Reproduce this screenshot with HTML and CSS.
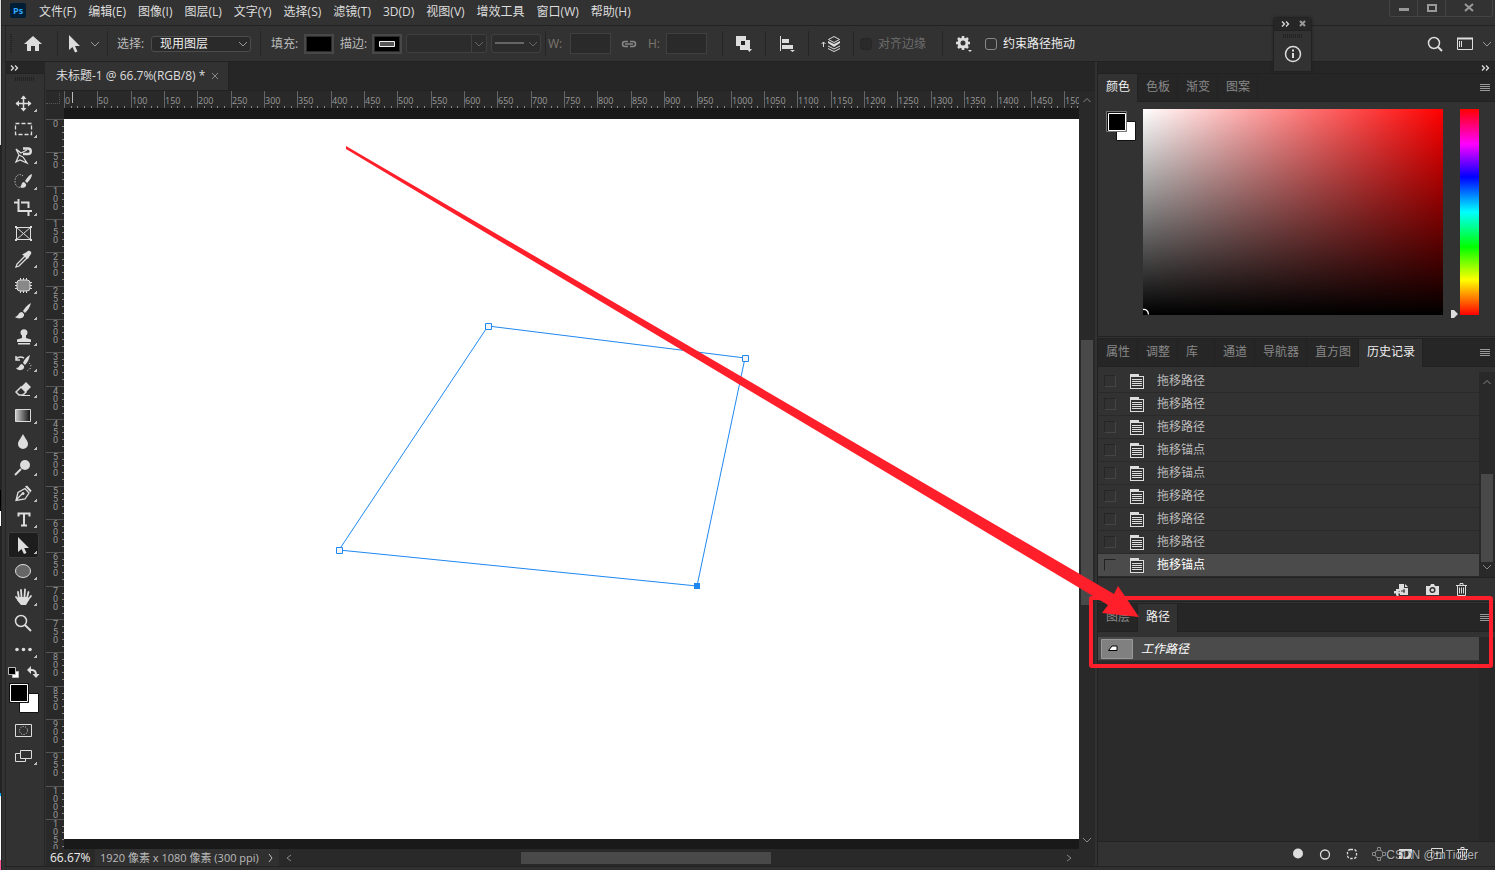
FILE: index.html
```html
<!DOCTYPE html>
<html lang="zh-CN">
<head>
<meta charset="utf-8">
<title>未标题-1 @ 66.7%(RGB/8)</title>
<link rel="stylesheet" href="styles.css">
</head>
<body>
<svg class="defs" aria-hidden="true">
  <symbol id="chev" viewBox="0 0 10 10"><path d="M1 3l4 4 4-4" fill="none" stroke="currentColor"/></symbol>
  <symbol id="chev-up" viewBox="0 0 10 10"><path d="M1.500 7L5 3.500 8.500 7" fill="none" stroke="currentColor"/></symbol>
  <symbol id="dbl" viewBox="0 0 10 8"><path d="M1 1.500L3.500 4 1 6.500M5 1.500L7.500 4 5 6.500" fill="none" stroke="currentColor" stroke-width="1.300"/></symbol>
  <symbol id="burger" viewBox="0 0 10 8"><path d="M0 .5h10M0 2.500h10M0 4.500h10M0 6.500h10" stroke="currentColor"/></symbol>
  <symbol id="doc" viewBox="0 0 14 16"><path d="M0 0h9v2h5v13H0z" fill="currentColor"/><path class="doc-in" d="M1 3h12v11H1z"/><path d="M2 5.500h10M2 7.500h10M2 9.500h10M2 11.500h10" stroke="currentColor"/></symbol>
  <symbol id="cursor" viewBox="0 0 14 18"><path d="M1 0v15l3.500-3 2.500 5.500 2.500-1L7 11h5z" fill="currentColor"/></symbol>
  <symbol id="trash" viewBox="0 0 12 14"><path d="M0 2.500h11M4 2V.500h3V2M1.500 3v9.500h8V3M3.500 4.500v6M5.500 4.500v6M7.500 4.500v6" fill="none" stroke="currentColor"/></symbol>
</svg>
<div class="app">
  <div class="edge"></div>
  <div class="window">
    <header class="menubar">
      <svg class="logo" viewBox="0 0 16 15" role="img" aria-label="Ps"><rect width="16" height="15" rx="2" fill="#001e36"/><text x="3" y="11" class="logo-text">Ps</text></svg>
      <nav class="menus">
        <button>文件(F)</button><button>编辑(E)</button><button>图像(I)</button><button>图层(L)</button><button>文字(Y)</button><button>选择(S)</button><button>滤镜(T)</button><button>3D(D)</button><button>视图(V)</button><button>增效工具</button><button>窗口(W)</button><button>帮助(H)</button>
      </nav>
      <div class="winbtns">
        <button aria-label="最小化"><svg width="10" height="10"><path d="M0 6.500h10" stroke="currentColor" stroke-width="3"/></svg></button>
        <button aria-label="最大化"><svg width="10" height="10"><path d="M1 2h8v6H1z" fill="none" stroke="currentColor" stroke-width="2"/></svg></button>
        <button class="wide" aria-label="关闭"><svg width="10" height="10"><path d="M1 1l8 7M9 1L1 8" stroke="currentColor" stroke-width="2"/></svg></button>
      </div>
    </header>

    <div class="options">
      <span class="grip-v"></span>
      <button class="home" aria-label="主页"><svg width="18" height="16"><path d="M9 0L0 8h3v7h4v-5h4v5h4V8h3z" fill="currentColor"/></svg></button>
      <i class="sep"></i>
      <button class="cur" aria-label="直接选择工具"><svg width="14" height="18"><use href="#cursor"/></svg><svg class="dim" width="10" height="10"><use href="#chev"/></svg></button>
      <i class="sep"></i>
      <label class="lab" for="sel">选择:</label>
      <span class="selwrap"><select id="sel" class="sel"><option>现用图层</option></select><svg class="selchev" width="10" height="10"><use href="#chev"/></svg></span>
      <i class="sep"></i>
      <span class="lab fill">填充:</span><button class="swatch" aria-label="填充颜色"></button>
      <span class="lab lab2">描边:</span><button class="swatch" aria-label="描边颜色"><svg width="16" height="6"><path d="M.5.5h15v5H.5z" fill="#555" stroke="#eee"/></svg></button>
      <button class="combo" aria-label="描边宽度"><svg width="10" height="10"><use href="#chev"/></svg></button>
      <button class="combo line" aria-label="描边类型"><svg width="29" height="4"><path d="M0 1h29" stroke="currentColor" stroke-width="2"/></svg><svg width="10" height="10"><use href="#chev"/></svg></button>
      <i class="sep tight"></i>
      <label class="wh" for="w">W:</label><input id="w" class="num">
      <svg class="link" width="16" height="10"><path d="M7 2.500H4a2.500 2.500 0 0 0 0 5h3M9 2.500h3a2.500 2.500 0 0 1 0 5H9M4 5h8" fill="none" stroke="currentColor" stroke-width="1.500"/></svg>
      <label class="wh" for="h">H:</label><input id="h" class="num">
      <i class="sep s3"></i>
      <button class="ico" aria-label="路径操作"><svg width="18" height="18"><path d="M1 1h10v4h4v10H5v-4H1z" fill="currentColor"/><path d="M6 6h4v4H6z" fill="#222"/><path d="M12 14h5l-2.500 3z" fill="currentColor"/></svg></button>
      <i class="sep"></i>
      <button class="ico" aria-label="路径对齐"><svg width="18" height="18"><path d="M2.500 1v15" stroke="currentColor"/><path d="M4 4h7v4H4zM4 10h11v4H4zM12 15h5l-2.500 2z" fill="currentColor"/></svg></button>
      <i class="sep"></i>
      <button class="ico" aria-label="路径排列"><svg width="20" height="18"><path d="M2.500 12V7M.5 9l2-2 2 2" fill="none" stroke="currentColor"/><path d="M7 6l6 3 6-3v2l-6 4-6-4z" fill="currentColor"/><path d="M7.500 4.500L13 1.500l5.500 3-5.500 3zM7 11l6 3 6-3M7 13.500l6 3 6-3" fill="none" stroke="currentColor"/></svg></button>
      <i class="sep"></i>
      <label class="check off"><input type="checkbox" disabled>对齐边缘</label>
      <i class="sep s4"></i>
      <button class="ico" aria-label="设置"><svg width="18" height="18"><circle cx="8" cy="8" r="4" fill="none" stroke="currentColor" stroke-width="3"/><path d="M8 1v3M8 12v3M1 8h3M12 8h3M3 3l2 2M11 11l2 2M13 3l-2 2M3 13l2-2" stroke="currentColor" stroke-width="2.500"/><path d="M13 15h4l-2 2z" fill="currentColor"/></svg></button>
      <label class="check"><input type="checkbox">约束路径拖动</label>
      <div class="right">
        <button aria-label="搜索"><svg width="16" height="16"><circle cx="7" cy="7" r="5.500" fill="none" stroke="currentColor" stroke-width="1.500"/><path d="M11 11l4 4" stroke="currentColor" stroke-width="2"/></svg></button>
        <button aria-label="工作区"><svg width="16" height="14"><path d="M.5 1.500h15v11H.5z" fill="none" stroke="currentColor"/><path d="M0 1.500h16" stroke="currentColor" stroke-width="2"/><path d="M2.500 4v6M4.500 4v6" stroke="currentColor"/></svg></button>
        <button class="rchev" aria-label="更多"><svg width="10" height="10"><use href="#chev"/></svg></button>
      </div>
    </div>

    <div class="main">
      <aside class="tools">
        <div class="thead"><svg width="10" height="8"><use href="#dbl"/></svg></div>
        <div class="grip-h"></div>
        <div class="toollist" id="tools">
          <button aria-label="移动"><svg class="t"><path d="M15.500 6v14M8 13.500h15" stroke="currentColor" stroke-width="1.500"/><path d="M12.500 9l3-3.500 3 3.500zM12.500 18l3 3.500 3-3.500zM11 10.500l-3.500 3 3.500 3zM20 10.500l3.500 3-3.500 3z" fill="currentColor"/></svg></button>
          <button aria-label="矩形选框"><svg class="t"><path d="M7.500 7.500h16v11h-16z" fill="none" stroke="currentColor" stroke-dasharray="4 2" stroke-width="1.300"/></svg></button>
          <button aria-label="套索"><svg class="t"><path d="M8 7l5 4 6-3M8 7l3 6-3 7 4-2 7 3-4-6M11 13l4 2" fill="none" stroke="currentColor" stroke-width="1.300"/><path d="M15 6.500h5a2.500 2.500 0 0 1 0 5.500h-5" fill="none" stroke="currentColor" stroke-width="2.500"/></svg></button>
          <button aria-label="快速选择"><svg class="t"><path d="M15 8c-3-3-8-1-8 5s4 7 7 6" fill="none" stroke="currentColor" stroke-dasharray="1 1.500"/><path d="M24 6c-3 1-5 4-7 7l2 2c3-3 5-6 5-9zM16 14c-3 0-2 4-4 5 3 2 7 0 6-3z" fill="currentColor"/></svg></button>
          <button aria-label="裁剪"><svg class="t"><path d="M6 8.500h4M10.500 5v12H24M13 8.500h7.500V14M20.500 18v4" fill="none" stroke="currentColor" stroke-width="2"/></svg></button>
          <button class="nf" aria-label="图框"><svg class="t"><path d="M8.500 7.500h14v12h-14zM8 7l15 13M23 7L8 20" fill="none" stroke="currentColor"/><path d="M7 6h2v2H7zM22 6h2v2h-2zM7 19h2v2H7zM22 19h2v2h-2z" fill="currentColor"/></svg></button>
          <button aria-label="吸管"><svg class="t"><path d="M17 10l-8 8-1 3 3-1 8-8" fill="none" stroke="currentColor" stroke-width="1.300"/><path d="M15 8l2-1 3-2c2-1 4 1 3 3l-2 3-1 2-2-1-4-4z" fill="currentColor"/></svg></button>
          <button aria-label="修复"><svg class="t"><rect x="9" y="8" width="13" height="11" rx="3" fill="#888" stroke="currentColor"/><path d="M12.500 6v2M15.500 6v2M18.500 6v2M12.500 19v2M15.500 19v2M18.500 19v2M7 10.500h2M7 13.500h2M7 16.500h2M22 10.500h2M22 13.500h2M22 16.500h2" stroke="currentColor"/></svg></button>
          <button aria-label="画笔"><svg class="t"><path d="M23 5c-4 2-7 6-8 8l2 2c3-3 5-6 6-10zM14 14c-4 0-3 4-7 5 4 3 10 1 9-3z" fill="currentColor"/></svg></button>
          <button aria-label="图章"><svg class="t"><path d="M14 14v-2.500a3.500 3.500 0 1 1 4 0V14l5 1.500V18H9v-2.500zM10 19h12v1.500H10z" fill="currentColor"/></svg></button>
          <button aria-label="历史画笔"><svg class="t"><path d="M22 5c-4 2-6 5-7 8l2 2c3-3 4-6 5-10zM14 14c-3 0-2 4-6 4 3 4 9 2 8-2z" fill="currentColor"/><path d="M8 6v4h4M8 9c3-3 6-2 8-1" fill="none" stroke="currentColor" stroke-width="1.500"/><path d="M21 13l2 2-1 4-3 2" fill="none" stroke="currentColor" stroke-dasharray="1 2"/></svg></button>
          <button aria-label="橡皮擦"><svg class="t"><path d="M8 16l5-5 5 5-3 3h-4z" fill="none" stroke="currentColor" stroke-width="1.500"/><path d="M13 11l5-5 5 5-5 5zM14 19h8v1h-9z" fill="currentColor"/></svg></button>
          <button aria-label="渐变"><svg class="t"><defs><linearGradient id="gg"><stop stop-color="#ccc"/><stop offset="1" stop-color="#111"/></linearGradient></defs><path d="M7.500 7.500h15v12h-15z" fill="url(#gg)" stroke="currentColor"/></svg></button>
          <button aria-label="模糊"><svg class="t"><path d="M15 6c2 4 5 7 5 10a5 5 0 0 1-10 0c0-3 3-6 5-10z" fill="currentColor"/></svg></button>
          <button aria-label="减淡"><svg class="t"><circle cx="17" cy="11" r="5" fill="currentColor"/><path d="M13 15l-6 6" stroke="currentColor" stroke-width="2"/></svg></button>
          <button aria-label="钢笔"><svg class="t"><path d="M8 20.500l2-8 7-4 4 4.500-4 6zM8 20l6-6" fill="none" stroke="currentColor" stroke-width="1.300"/><circle cx="15" cy="13.500" r="1.500" fill="currentColor"/><path d="M17 6.500l2-1 4.500 5-1 2z" fill="currentColor"/></svg></button>
          <button aria-label="文字"><svg class="t"><path d="M10.500 10.500V7.500h11v3M16 7v12M13 19.500h6" fill="none" stroke="currentColor" stroke-width="2"/></svg></button>
          <button class="on" aria-label="直接选择"><svg class="t"><path d="M10 5v15l3.500-3 2.500 5 2.500-1-2.300-5H21z" fill="currentColor"/></svg></button>
          <button aria-label="椭圆"><svg class="t"><ellipse cx="15" cy="13" rx="7.500" ry="6.500" fill="#666" stroke="currentColor"/></svg></button>
          <button aria-label="抓手"><svg class="t"><path d="M11 15l-1-7M13.500 13l-.5-7M16.500 13l.5-7.500M19 14l1.500-6M8 13l4 5M23 12l-4 5" stroke="currentColor" stroke-width="1.800" stroke-linecap="round"/><path d="M10 13h10l1 3-3 5h-5l-4-5z" fill="currentColor"/></svg></button>
          <button class="nf" aria-label="缩放"><svg class="t"><circle cx="13" cy="11" r="5.500" fill="none" stroke="currentColor" stroke-width="1.500"/><path d="M17 15l6 6" stroke="currentColor" stroke-width="2"/></svg></button>
          <button aria-label="更多工具"><svg class="t"><circle cx="9" cy="13.500" r="1.800" fill="currentColor"/><circle cx="15.500" cy="13.500" r="1.800" fill="currentColor"/><circle cx="22" cy="13.500" r="1.800" fill="currentColor"/></svg></button>
        </div>
        <svg class="fgbg" width="34" height="54">
          <path d="M4.500 8.500h6v6h-6z" fill="#fff" stroke="#bbb"/><path d="M.5 4.500h7v7h-7z" fill="#000" stroke="#bbb"/>
          <path d="M22 7h2q4 0 4 5" fill="none" stroke="#ddd" stroke-width="2"/><path d="M23 3v8l-4-4zM24.500 11h7L28 15z" fill="#ddd"/>
          <path d="M11.500 30.500h19v19h-19z" fill="#fff" stroke="#111"/><path d="M1.500 20.500h19v19h-19z" fill="#000" stroke="#111"/><path d="M2.500 21.500h17v17h-17z" fill="#000" stroke="#fff"/>
        </svg>
        <div class="toollist">
          <button class="nf" aria-label="快速蒙版"><svg class="t"><path d="M7.500 7.500h16v12h-16z" fill="none" stroke="currentColor"/><circle cx="15.500" cy="13.500" r="4" fill="none" stroke="currentColor" stroke-dasharray="1 1.500"/></svg></button>
          <button aria-label="屏幕模式"><svg class="t"><path d="M7.500 10.500h10v8h-10z" fill="none" stroke="currentColor"/><path d="M12.500 7.500h11v8h-11z" fill="#323232" stroke="currentColor"/></svg></button>
        </div>
      </aside>

      <main class="docarea">
        <div class="tabs"><div class="doctab"><span>未标题-1 @ 66.7%(RGB/8) *</span><button aria-label="关闭文档"><svg width="8" height="8"><path d="M1 1l6 6M7 1L1 7" stroke="currentColor"/></svg></button></div></div>
        <div class="work">
          <div class="corner"></div>
          <svg class="ruler rh" id="rh"></svg>
          <div class="vsb-top"><svg width="10" height="10"><use href="#chev-up"/></svg></div>
          <svg class="ruler rv" id="rv"></svg>
          <div class="stage"><div class="page">
            <svg class="path">
              <path d="M424 207L681 239 633 467 275 431z" fill="none" stroke="#1e88f0"/>
              <path d="M421.500 204.500h6v6h-6zM678.500 236.500h6v6h-6zM272.500 428.500h6v6h-6z" fill="#f4f4f4" stroke="#1e88f0"/><path d="M630 464h6v6h-6z" fill="#1e88f0"/>
            </svg>
          </div></div>
          <div class="vsb"><span class="vthumb"></span><svg width="10" height="10"><use href="#chev"/></svg></div>
        </div>
        <div class="status">
          <input class="zoomval" aria-label="缩放比例" value="66.67%">
          <button class="info"><span>1920 像素 x 1080 像素 (300 ppi)</span><svg width="6" height="10"><path d="M1 1l3 4-3 4" fill="none" stroke="currentColor"/></svg></button>
          <div class="hsb"><svg width="6" height="8"><path d="M5 1L1 4l4 3" fill="none" stroke="currentColor"/></svg><span class="hthumb"></span><svg width="6" height="8"><path d="M1 1l4 3-4 3" fill="none" stroke="currentColor"/></svg></div>
        </div>
      </main>

      <aside class="panels">
        <div class="phead"><svg width="10" height="8"><use href="#dbl"/></svg></div>
        <section>
          <div class="ptabs"><button class="on">颜色</button><button>色板</button><button>渐变</button><button>图案</button><svg class="burger" width="10" height="8"><use href="#burger"/></svg></div>
          <div class="color">
            <svg class="fb" width="32" height="34"><path d="M10.500 10.500h19v19h-19z" fill="#fff" stroke="#111"/><path d="M.5.5h20v20H.5z" fill="#111" stroke="#777"/><path d="M2.500 2.500h17v17h-17z" fill="#000" stroke="#fff"/></svg>
            <div class="field"><svg width="7" height="7"><path d="M0 1.500q5-.5 5.500 5" fill="none" stroke="#fff" stroke-width="1.300"/></svg></div>
            <div class="hue"><svg width="8" height="8"><path d="M1 0h3l4 4-4 4H1z" fill="#ddd"/></svg></div>
          </div>
        </section>
        <section>
          <div class="ptabs"><button>属性</button><button>调整</button><button class="ku">库</button><button>通道</button><button>导航器</button><button>直方图</button><button class="on">历史记录</button><svg class="burger" width="10" height="8"><use href="#burger"/></svg></div>
          <div class="hist">
            <div class="rows" id="rows">
              <label><input type="checkbox"><svg width="14" height="16"><use href="#doc"/></svg>拖移路径</label>
              <label><input type="checkbox"><svg width="14" height="16"><use href="#doc"/></svg>拖移路径</label>
              <label><input type="checkbox"><svg width="14" height="16"><use href="#doc"/></svg>拖移路径</label>
              <label><input type="checkbox"><svg width="14" height="16"><use href="#doc"/></svg>拖移锚点</label>
              <label><input type="checkbox"><svg width="14" height="16"><use href="#doc"/></svg>拖移锚点</label>
              <label><input type="checkbox"><svg width="14" height="16"><use href="#doc"/></svg>拖移路径</label>
              <label><input type="checkbox"><svg width="14" height="16"><use href="#doc"/></svg>拖移路径</label>
              <label><input type="checkbox"><svg width="14" height="16"><use href="#doc"/></svg>拖移路径</label>
              <label class="cur-row"><input type="checkbox"><svg width="14" height="16"><use href="#doc"/></svg>拖移锚点</label>
            </div>
            <div class="hscroll"><svg width="10" height="10"><use href="#chev-up"/></svg><span></span><svg width="10" height="10"><use href="#chev"/></svg></div>
          </div>
          <div class="hfoot">
            <button aria-label="从当前状态创建新文档"><svg width="15" height="12"><path d="M5 0h5v4h4v7H6V7H3v4H2V9H0V7h2V5h3z" fill="currentColor"/><path d="M11 0l3 3h-3z" fill="currentColor"/><path d="M3.500 5v7M0 8.500h9M8 3.500v4" stroke="currentColor" stroke-width="2"/><path d="M10 5v4M7 7h4" stroke="#323232"/></svg></button>
            <button aria-label="创建新快照"><svg width="13" height="12"><path d="M0 2h4l1-2h3l1 2h4v9H0z" fill="currentColor"/><circle cx="6.500" cy="6" r="2.300" fill="none" stroke="#323232" stroke-width="1.500"/></svg></button>
            <button aria-label="删除当前状态"><svg width="12" height="14"><use href="#trash"/></svg></button>
          </div>
        </section>
        <section class="paths">
          <div class="ptabs"><button>图层</button><button class="on">路径</button><svg class="burger" width="10" height="8"><use href="#burger"/></svg></div>
          <div class="pbody">
            <div class="plist"><button class="prow"><svg width="32" height="20"><path d="M.5.5h31v19H.5z" fill="#808080" stroke="#999"/><path d="M7.500 11.500L11 7h5v4.500z" fill="#fff" stroke="#000"/></svg><em>工作路径</em></button></div>
            <div class="pscroll"></div>
          </div>
          <div class="pfoot">
            <button aria-label="填充路径"><svg width="14" height="14"><circle cx="7" cy="6.500" r="5" fill="currentColor"/></svg></button>
            <button aria-label="描边路径"><svg width="14" height="14"><circle cx="7" cy="7.500" r="4.500" fill="none" stroke="currentColor" stroke-width="1.300"/></svg></button>
            <button aria-label="作为选区载入"><svg width="14" height="14"><rect x="2.500" y="2.500" width="9" height="9" rx="3" fill="none" stroke="currentColor" stroke-dasharray="2.500 1.500" stroke-width="1.300"/></svg></button>
            <button class="faint" aria-label="生成工作路径"><svg width="14" height="14"><circle cx="7" cy="7" r="4" fill="none" stroke="currentColor"/><path d="M5.500.5h3v3h-3zM5.500 10.500h3v3h-3zM.5 5.500h3v3h-3zM10.500 5.500h3v3h-3z" fill="#323232" stroke="currentColor"/></svg></button>
            <button aria-label="添加蒙版"><svg width="14" height="14"><path d="M0 2h13v10H0z" fill="currentColor"/><circle cx="6.500" cy="7" r="3" fill="#323232"/></svg></button>
            <button class="mid" aria-label="新建路径"><svg width="14" height="14"><path d="M1.500 1.500h11v10h-11zM7 4v5M4.500 6.500h5" fill="none" stroke="currentColor"/></svg></button>
            <button aria-label="删除路径"><svg width="12" height="14"><use href="#trash"/></svg></button>
          </div>
        </section>
      </aside>
    </div>
    <div class="bottom"></div>
  </div>

  <div class="float">
    <div class="fhead"><svg width="10" height="8"><use href="#dbl"/></svg><svg width="8" height="8"><path d="M1 1l5 5M6 1L1 6" stroke="#999" stroke-width="2"/></svg></div>
    <div class="grip-h"></div>
    <button aria-label="信息"><svg width="18" height="18"><circle cx="9" cy="9" r="7.500" fill="none" stroke="currentColor" stroke-width="1.500"/><path d="M9 8v5M9 4.500v2" stroke="currentColor" stroke-width="2"/></svg></button>
  </div>
  <svg class="annot" aria-hidden="true">
    <path d="M346 146L1114 594 1118 586 1139 617 1102 613 1108 605 346 149z" fill="#ff1f2a"/>
    <rect x="1091" y="598" width="400" height="68" rx="1" fill="none" stroke="#ff1f2a" stroke-width="4"/>
  </svg>
  <div class="mark">CSDN @mTicker</div>
</div>
<script src="ruler.js"></script>
</body>
</html>
```
FILE: styles.css
```css
* { box-sizing: border-box; }
body { margin: 0; background: #323232; color: #ddd; font: 12px/16px "Open Sans", "Noto Sans CJK SC", sans-serif; }
button, input, select { font: inherit; color: inherit; background: none; border: 0; padding: 0; margin: 0; }
svg { display: block; flex: none; }
.defs { position: absolute; width: 0; height: 0; }
.app { position: relative; display: flex; height: 100vh; overflow: hidden; }
.edge { width: 1px; background: linear-gradient(#ddd 0 145px, #222 145px 490px, #000 490px 511px, #fff 511px 526px, #222 526px 793px, #0af 793px 796px, #fff 796px 860px, #f59 860px); }
.window { flex: 1; min-width: 0; display: flex; flex-direction: column; border-left: 1px solid #252525; }

.menubar { display: flex; height: 26px; border-bottom: 1px solid #222; padding-left: 8px; align-items: flex-start; }
.logo { width: 16px; height: 15px; margin-top: 3px; }
.logo-text { font: bold 9px "Open Sans", sans-serif; fill: #31a8ff; }
.menus { display: flex; gap: 12px; padding: 4px 0 0 13px; }
.menus button { white-space: nowrap; }
.winbtns { display: flex; margin: 0 2px 0 auto; height: 17px; border: 1px solid #444; border-top: 0; border-radius: 0 0 3px 3px; color: #999; }
.winbtns button { width: 28px; display: flex; justify-content: center; align-items: center; border-right: 1px solid #444; }
.winbtns .wide { width: 46px; border: 0; }

.options { display: flex; height: 36px; align-items: center; border-bottom: 1px solid #222; margin-left: 3px; border-left: 1px solid #252525; white-space: nowrap; }
.grip-v { width: 2px; height: 20px; margin-left: 4px; background: repeating-linear-gradient(#222 0 1px, #323232 1px 2px); }
.home { margin: 0 15px 0 12px; }
.sep { width: 1px; height: 25px; background: #252525; flex: none; }
.cur { display: flex; align-items: center; gap: 8px; margin: 0 7px 0 10px; }
.dim { color: #999; }
.lab { color: #bbb; margin-left: 9px; width: 34px; }
.fill { margin-left: 10px; width: 33px; }
.lab2 { margin-left: 6px; width: 32px; }
.selwrap { position: relative; margin-right: 9px; }
.sel { appearance: none; width: 100px; height: 16px; background: #2a2a2a; border: 1px solid #4c4c4c; border-radius: 3px; padding-left: 8px; line-height: 14px; color: #eee; display: block; }
.selchev { position: absolute; right: 3px; top: 3px; color: #999; }
.swatch { width: 30px; height: 20px; border: 2px solid #484848; background: #000; display: flex; align-items: center; justify-content: center; outline: 1px solid #2c2c2c; outline-offset: -3px; }
.combo { width: 81px; height: 19px; margin-left: 4px; background: linear-gradient(90deg, transparent 64px, #404040 64px 65px, transparent 65px) #2c2c2c; border: 1px solid #404040; border-radius: 3px; display: flex; justify-content: flex-end; align-items: center; padding-right: 2px; color: #666; }
.line { width: 50px; background: #2c2c2c; justify-content: space-between; padding-left: 3px; }
.tight { margin-left: 4px; }
.wh { color: #7d766d; width: 18px; margin-left: 2px; }
.num { width: 41px; height: 21px; margin-left: 4px; background: #2a2a2a; border: 1px solid #404040; }
.link { color: #888; margin-left: 10px; }
.link + .wh { margin-left: 11px; }
.link + .wh + .num { margin-left: 0; }
.s3 { margin-left: 15px; }
.ico { margin: 0 12px; }
.check { display: flex; align-items: center; gap: 6px; color: #eee; }
.check input { appearance: none; width: 12px; height: 12px; border: 1px solid #888; border-radius: 3px; }
.off { color: #6b6b6b; margin-left: 6px; }
.off input { border-color: #262626; background: #2a2a2a; }
.s4 { margin-left: 16px; }
.right { display: flex; align-items: center; gap: 14px; margin: 0 3px 0 auto; }
.rchev { margin-left: -5px; color: #999; }

.main { flex: 1; min-height: 0; display: flex; margin-left: 3px; border-bottom: 1px solid #222; }
.bottom { height: 3px; background: #303030; }
.tools { width: 40px; border: 1px solid #252525; border-width: 0 1px; }
.thead { height: 12px; background: #262626; border-bottom: 1px solid #222; padding: 2px 0 0 4px; }
.grip-h { width: 20px; height: 4px; margin: 3px auto 0; background: repeating-linear-gradient(90deg, #222 0 1px, #323232 1px 2px); }
.tools .grip-h { margin-bottom: 9px; }
.toollist { display: flex; flex-direction: column; padding-left: 2px; }
.toollist button { width: 31px; height: 26px; position: relative; flex: none; }
.t { width: 31px; height: 26px; }
.toollist button::after { content: ""; position: absolute; right: 2px; bottom: 4px; width: 3px; height: 3px; background: linear-gradient(135deg, transparent 40%, #bbb 40%); }
.toollist .nf::after { display: none; }
.toollist .on { background: #1d1d1d; border-radius: 3px; box-shadow: inset 0 0 0 1px #3d3d3d; }
.fgbg { margin: 1px 0 0 2px; }

.docarea { flex: 1; min-width: 0; display: flex; flex-direction: column; margin-left: 1px; background: #262626; }
.tabs { height: 29px; border-bottom: 1px solid #222; display: flex; }
.doctab { display: flex; align-items: center; gap: 6px; padding: 0 9px 0 10px; background: #323232; border-right: 1px solid #222; white-space: nowrap; }
.doctab button { color: #888; }
.work { flex: 1; min-height: 0; display: grid; grid-template: 17px minmax(0, 1fr) / 18px minmax(0, 1fr) 16px; background: #292929; }
.corner { border: dotted #555; border-width: 0 1px 1px 0; margin: 2px 4px 4px 0; }
.ruler { width: 100%; height: 100%; overflow: hidden; }
.rlab { font: 9px "Open Sans", sans-serif; fill: #999; }
.rv .rlab { font: 9px "Roboto", sans-serif; }
.vsb-top, .vsb { color: #888; display: flex; flex-direction: column; align-items: center; }
.vsb-top { justify-content: center; }
.vsb { justify-content: flex-end; padding-bottom: 4px; }
.vthumb { width: 12px; height: 36%; margin-bottom: 230px; background: #494949; }
.stage { background: #191919; padding: 11px 0 10px; min-height: 0; }
.page { background: #fff; height: 100%; }
.path { width: 100%; height: 100%; }
.status { height: 17px; display: flex; background: #292929; white-space: nowrap; }
.zoomval { width: 49px; padding-left: 4px; color: #eee; }
.info { display: flex; align-items: center; gap: 9px; padding: 0 5px; background: #303030; color: #bbb; font-size: 11px; }
.hsb { flex: 1; display: flex; align-items: center; justify-content: space-between; padding: 0 23px 0 7px; color: #888; }
.hthumb { width: 250px; height: 12px; background: #494949; margin-right: 66px; }

.panels { width: 398px; margin-left: 2px; border-left: 1px solid #222; display: flex; flex-direction: column; background: #323232; }
.phead { height: 12px; background: #262626; border-bottom: 1px solid #222; display: flex; justify-content: flex-end; padding: 2px 4px 0 0; }
.ptabs { display: flex; height: 28px; background: #262626; border-bottom: 1px solid #222; }
.ptabs button { padding: 0 7px 2px 8px; border-right: 1px solid #222; color: #888; white-space: nowrap; }
.ptabs .ku { padding-right: 16px; }
.ptabs .on { background: #323232; color: #eee; margin-bottom: -1px; }
.burger { margin: 10px 5px 0 auto; color: #999; }
.color { display: flex; padding: 7px 16px 21px 8px; }
.fb { margin: 2px 5px 0 0; }
.field { flex: 1; height: 206px; margin-right: 17px; display: flex; align-items: flex-end; overflow: hidden; background: linear-gradient(transparent, #000), linear-gradient(90deg, #fff, #f00); }
.hue { position: relative; width: 19px; background: linear-gradient(#f00, #f0f 17%, #00f 33%, #0ff 50%, #0f0 67%, #ff0 83%, #f00); }
.hue svg { position: absolute; right: 21px; bottom: -3px; }
.panels section + section { border-top: 3px double #222; }
.hist { display: flex; height: 210px; padding-top: 3px; }
.rows { flex: 1; }
.rows label { height: 23px; display: flex; align-items: center; padding-left: 6px; border-bottom: 1px solid #2a2a2a; color: #bbb; }
.rows svg { margin: 2px 13px 0 14px; color: #ddd; }
.rows input { appearance: none; width: 12px; height: 12px; border: 1px solid; border-color: #262626 #454545 #454545 #262626; }
.doc-in { fill: #323232; }
.rows .cur-row { background: #4b4b4b; color: #fff; }
.rows .cur-row input { border-color: #222 #4b4b4b #4b4b4b #222; }
.hscroll { width: 16px; background: #292929; display: flex; flex-direction: column; align-items: center; color: #888; padding: 5px 0; margin-top: 2px; }
.hscroll span { width: 12px; height: 88px; background: #494949; margin-top: auto; }
.hfoot { height: 24px; border-top: 1px solid #222; display: flex; justify-content: flex-end; align-items: center; gap: 17px; padding-right: 27px; color: #ddd; }
.paths { flex: 1; min-height: 0; display: flex; flex-direction: column; }
.pbody { flex: 1; display: flex; background: #2b2b2b; border-top: 5px solid #323232; }
.plist { flex: 1; }
.prow { display: flex; align-items: center; gap: 8px; width: 100%; height: 24px; background: #4b4b4b; padding-left: 3px; color: #fff; border-bottom: 1px solid #333; }
.pscroll { width: 16px; background: #282828; }
.pfoot { height: 25px; border-top: 1px solid #222; display: flex; justify-content: flex-end; align-items: center; gap: 13px; padding-right: 26px; color: #ddd; }
.faint { color: #888; }
.pfoot .mid { margin-left: 4px; }

.float { position: absolute; right: 183px; top: 17px; width: 39px; height: 55px; background: #323232; border: 1px solid #222; border-radius: 4px 4px 0 0; box-shadow: 0 0 3px #222; color: #ddd; }
.fhead { height: 13px; background: #262626; border-bottom: 1px solid #222; display: flex; justify-content: space-between; align-items: center; padding: 0 4px 0 7px; }
.float button { display: block; margin: 7px auto 0; }
.annot { position: absolute; inset: 0; width: 100%; height: 100%; pointer-events: none; }
.mark { position: absolute; right: 17px; bottom: 7px; font: 12px/16px "Liberation Sans", sans-serif; color: #ccc; text-shadow: 1px 1px 0 #222; opacity: .8; pointer-events: none; }
```
FILE: ruler.js
```js
const NS = "http://www.w3.org/2000/svg";
const STEP = 100 / 3;

function line(svg, d, color) {
  const p = document.createElementNS(NS, "path");
  p.setAttribute("d", d);
  p.setAttribute("stroke", color);
  svg.append(p);
}

function label(svg, x, y, text) {
  const t = document.createElementNS(NS, "text");
  t.setAttribute("x", x);
  t.setAttribute("y", y);
  t.setAttribute("class", "rlab");
  t.textContent = text;
  svg.append(t);
}

const rh = document.getElementById("rh");
const rv = document.getElementById("rv");
let major = "";
let minor = "";
for (let i = 0; i <= 30; i++) {
  const x = Math.round(i * STEP);
  major += `M${x + 0.5} 0v17`;
  for (let k = 1; k < 5; k++) minor += `M${Math.round(i * STEP + k * STEP / 5) + 0.5} ${15}v2`;
  label(rh, x + 1, 13, i * 50);
}
line(rh, major, "#666");
line(rh, minor, "#888");
line(rh, "M8.500 1v11", "#bbb");

major = "";
minor = "";
for (let i = 0; i <= 21; i++) {
  const y = Math.round(i * STEP) + 11;
  major += `M0 ${y + 0.5}h18`;
  for (let k = 1; k < 5; k++) minor += `M16 ${Math.round(y + k * STEP / 5) + 0.5}h2`;
  String(i * 50).split("").forEach((c, n) => label(rv, 7, y + 8 + n * 8, c));
}
line(rv, major, "#555");
line(rv, minor, "#888");
```
